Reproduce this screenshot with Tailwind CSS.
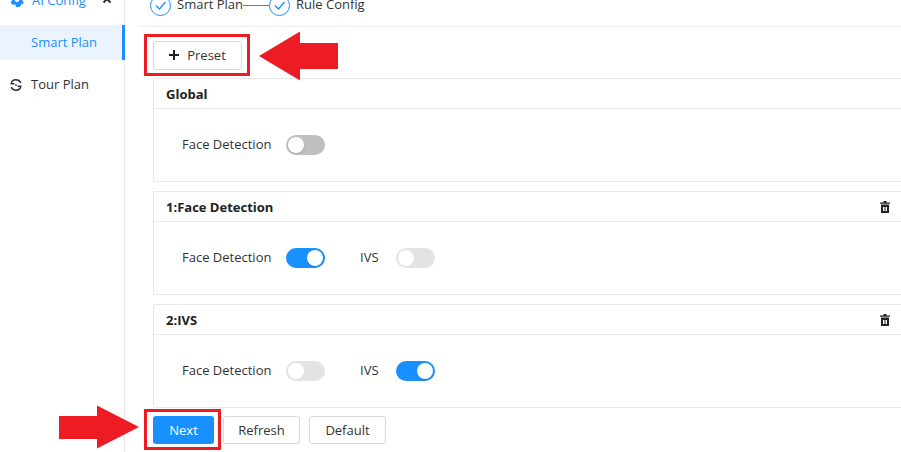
<!DOCTYPE html>
<html lang="en">
<head>
    <meta charset="UTF-8">
    <meta name="viewport" content="width=device-width, initial-scale=1.0">
    <title>Smart Plan</title>
    <script src="https://cdn.jsdelivr.net/npm/@tailwindcss/browser@4"></script>
</head>
<body class="bg-white font-['Open_Sans','Noto_Sans',sans-serif] text-[13px] leading-5 text-[#333]">
    <div class="relative flex min-h-screen overflow-hidden">

        <!-- Sidebar -->
        <nav class="-mt-[17px] flex w-[125px] shrink-0 flex-col gap-[7px] border-r border-[#e8e8e8]">
            <a href="#" class="flex h-[35px] items-center pb-[2px] pl-[10px] text-[#1890ff]">
                <svg class="mr-2 h-[14px] w-[14px]" viewBox="0 0 14 14" fill="currentColor">
                    <path fill-rule="evenodd" d="M5 0h4l.4 2 1.600.8L13 2l1 3-1.500 1.500V8L14 9.500 12.500 11H11v2H9.500v1H6v-1.500L4.500 11.500H2L.5 9l1.500-1V6.300L0 5l1.500-3 2 .8L5 2zM7 4.500a2.300 2.300 0 1 0 .01 0z"/>
                </svg>
                AI Config
                <svg class="ml-4 h-[10px] w-[10px]" viewBox="0 0 10 10" fill="none" stroke="#333" stroke-width="2"><path d="M1.500 7.500 5 4l3.500 3.500"/></svg>
            </a>
            <a href="#" class="-mr-px flex h-[35px] items-center border-r-3 border-[#1890ff] bg-[#ebf3ff] pb-[2px] pl-[31px] text-[#1890ff]">Smart Plan</a>
            <a href="#" class="flex h-[35px] items-center pl-[10px]">
                <svg class="mr-[9px] h-3 w-3" viewBox="0 0 12 12" fill="none" stroke="#333" stroke-width="1.500">
                    <path d="M10.800 3.800C9.800 1.800 8 .8 6 .8 3.500.8 1.500 2 1.200 4.800h3.300"/>
                    <path d="M1.200 8.200c1 2 2.800 3 4.800 3 2.500 0 4.500-1.200 4.800-4H7.500"/>
                    <path d="M5.200 6h1.600"/>
                </svg>
                <span class="pb-[2px]">Tour Plan</span>
            </a>
        </nav>

        <main class="min-w-0 flex-1">
            <!-- Steps -->
            <div class="-mt-4 ml-[14px] flex h-[43px] items-center border-b border-[#eee] pl-[11px]">
                <svg class="mr-[6px] h-[21px] w-[21px]" viewBox="0 0 21 21" fill="none" stroke="#1890ff"><circle cx="10.500" cy="10.500" r="10"/><path stroke-width="1.300" d="m6 10.500 3.500 3.500L15.500 7"/></svg>
                <span class="pb-[2px]">Smart Plan</span>
                <span class="h-px w-[26px] bg-[#1890ff]"></span>
                <svg class="mr-[6px] h-[21px] w-[21px]" viewBox="0 0 21 21" fill="none" stroke="#1890ff"><circle cx="10.500" cy="10.500" r="10"/><path stroke-width="1.300" d="m6 10.500 3.500 3.500L15.500 7"/></svg>
                <span class="pb-[2px]">Rule Config</span>
            </div>

            <div class="pl-7 pt-[14px]">
                <div class="relative w-fit">
                    <button type="button" class="flex h-[29px] w-[89px] items-center justify-center gap-2 rounded-[3px] border border-[#d9d9d9] bg-white pb-px">
                        <svg class="h-[10px] w-[10px]" viewBox="0 0 10 10" stroke="#222" stroke-width="2"><path d="M5 0v10M0 5h10"/></svg>
                        Preset
                    </button>
                    <div class="pointer-events-none absolute -top-[7px] -right-2 -bottom-[6px] -left-[9px] border-3 border-[#ed1c24]"></div>
                    <svg class="absolute -top-[10px] left-[106px] h-[50px] w-[80px]" viewBox="0 0 80 50" fill="#ed1c24"><path d="M0 25 41 0.500V12h38v26H41v11.500z"/></svg>
                </div>

                <div class="mt-2 flex flex-col gap-[9px]">
                    <section class="rounded-l-xs border border-r-0 border-[#e8e8e8]">
                        <h2 class="flex h-[30px] items-center border-b border-[#e8e8e8] pl-3 font-bold text-[#222]">Global</h2>
                        <div class="flex h-[72px] items-center pl-7">
                            <label for="globalFace" class="w-[104px] pb-[2px]">Face Detection</label>
                            <input type="checkbox" id="globalFace" class="h-5 w-[39px] appearance-none rounded-full bg-[#bfbfbf] p-[2px] before:block before:h-4 before:w-4 before:rounded-full before:bg-white before:shadow-sm checked:bg-[#1890ff] checked:before:ml-auto">
                        </div>
                    </section>

                    <section class="rounded-l-xs border border-r-0 border-[#e8e8e8]">
                        <div class="flex h-[30px] items-center justify-between border-b border-[#e8e8e8] pl-3 pr-[11px]">
                            <h2 class="font-bold text-[#222]">1:Face Detection</h2>
                            <button type="button" aria-label="Delete preset 1">
                                <svg class="h-3 w-[10px]" viewBox="0 0 10 12" fill="#222"><path d="M3.500 0h3v1.500H10v1.200H0V1.500h3.500z"/><path fill-rule="evenodd" d="M1 3.500h8V12H1zM3 6v4h1V6zM4.500 6v4h1V6zM6 6v4h1V6z"/></svg>
                            </button>
                        </div>
                        <div class="flex h-[72px] items-center pl-7">
                            <label for="face1" class="w-[104px] pb-[2px]">Face Detection</label>
                            <input type="checkbox" id="face1" checked class="mr-[35px] h-5 w-[39px] appearance-none rounded-full bg-[#bfbfbf] p-[2px] before:block before:h-4 before:w-4 before:rounded-full before:bg-white before:shadow-sm checked:bg-[#1890ff] checked:before:ml-auto">
                            <label for="ivs1" class="w-9 pb-[2px]">IVS</label>
                            <input type="checkbox" id="ivs1" disabled class="h-5 w-[39px] appearance-none rounded-full bg-[#e3e3e3] p-[2px] before:block before:h-4 before:w-4 before:rounded-full before:bg-white">
                        </div>
                    </section>

                    <section class="rounded-l-xs border border-r-0 border-[#e8e8e8]">
                        <div class="flex h-[30px] items-center justify-between border-b border-[#e8e8e8] pl-3 pr-[11px]">
                            <h2 class="font-bold text-[#222]">2:IVS</h2>
                            <button type="button" aria-label="Delete preset 2">
                                <svg class="h-3 w-[10px]" viewBox="0 0 10 12" fill="#222"><path d="M3.500 0h3v1.500H10v1.200H0V1.500h3.500z"/><path fill-rule="evenodd" d="M1 3.500h8V12H1zM3 6v4h1V6zM4.500 6v4h1V6zM6 6v4h1V6z"/></svg>
                            </button>
                        </div>
                        <div class="flex h-[72px] items-center pl-7">
                            <label for="face2" class="w-[104px] pb-[2px]">Face Detection</label>
                            <input type="checkbox" id="face2" disabled class="mr-[35px] h-5 w-[39px] appearance-none rounded-full bg-[#e3e3e3] p-[2px] before:block before:h-4 before:w-4 before:rounded-full before:bg-white">
                            <label for="ivs2" class="w-9 pb-[2px]">IVS</label>
                            <input type="checkbox" id="ivs2" checked class="h-5 w-[39px] appearance-none rounded-full bg-[#bfbfbf] p-[2px] before:block before:h-4 before:w-4 before:rounded-full before:bg-white before:shadow-sm checked:bg-[#1890ff] checked:before:ml-auto">
                        </div>
                    </section>
                </div>

                <div class="mt-2 flex gap-[9px]">
                    <div class="relative">
                        <button type="button" class="h-7 w-[61px] rounded-[3px] bg-[#1890ff] pb-px text-white">Next</button>
                        <div class="pointer-events-none absolute -top-[7px] -right-[7px] -bottom-[6px] -left-[9px] border-3 border-[#ed1c24]"></div>
                        <svg class="absolute -top-[11px] -left-[94px] h-[44px] w-[80px]" viewBox="0 0 80 44" fill="#ed1c24"><path d="M80 22 38 0.500V11H0v23h38v9.500z"/></svg>
                    </div>
                    <button type="button" class="h-7 w-[77px] rounded-[3px] border border-[#d9d9d9] bg-white pb-px">Refresh</button>
                    <button type="button" class="h-7 w-[77px] rounded-[3px] border border-[#d9d9d9] bg-white pb-px">Default</button>
                </div>
            </div>
        </main>
    </div>
</body>
</html>
